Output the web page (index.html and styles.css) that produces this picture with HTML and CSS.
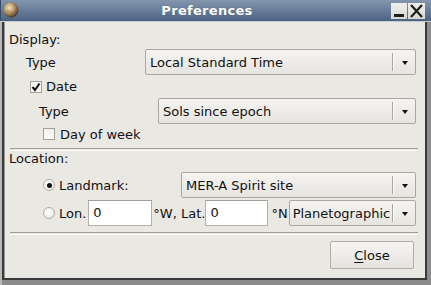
FILE: index.html
```html
<!DOCTYPE html>
<html>
<head>
<meta charset="utf-8">
<link rel="stylesheet" href="styles.css">
</head>
<body>
<div class="win">
  <div class="titlebar">
    <svg class="app-icon" width="16" height="16" viewBox="0 0 16 16">
      <defs>
        <radialGradient id="g1" cx="0.38" cy="0.35" r="0.65">
          <stop offset="0" stop-color="#efe3c4"/>
          <stop offset="0.45" stop-color="#c3a272"/>
          <stop offset="0.85" stop-color="#76593a"/>
          <stop offset="1" stop-color="#4b3a28"/>
        </radialGradient>
      </defs>
      <circle cx="8" cy="8" r="7.5" fill="url(#g1)"/>
      <path d="M4 9 q2 -1 4 1 q2 1 4 -1" stroke="#8a6a3c" stroke-width="0.8" fill="none" opacity="0.6"/>
    </svg>
    <div class="title">Preferences</div>
    <div class="wbtn min"><span class="min-bar"></span></div>
    <div class="wbtn close">
      <svg width="15" height="14" viewBox="0 0 15 14"><path d="M2 1 L13 13 M13 1 L2 13" stroke="#1e1e1e" stroke-width="2.2" fill="none"/></svg>
    </div>
  </div>
  <div class="client">
    <div class="section">Display:</div>
    <div class="row r-type1">
      <span class="lbl">Type</span>
      <div class="combo"><span class="val">Local Standard Time</span><span class="csep"></span><span class="arrow"></span></div>
    </div>
    <div class="crow r-date">
      <span class="check on">
        <svg width="10" height="10" viewBox="0 0 10 10"><path d="M1.5 5 L4 8 L8.5 1.5" stroke="#111" stroke-width="2" fill="none"/></svg>
      </span>
      <span>Date</span>
    </div>
    <div class="row r-type2">
      <span class="lbl">Type</span>
      <div class="combo"><span class="val">Sols since epoch</span><span class="csep"></span><span class="arrow"></span></div>
    </div>
    <div class="crow r-dow">
      <span class="check"></span>
      <span>Day of week</span>
    </div>
    <div class="hsep s1"></div>
    <div class="section">Location:</div>
    <div class="row r-land">
      <span class="radio on"><span class="dot"></span></span>
      <span class="lbl2">Landmark:</span>
      <div class="combo"><span class="val">MER-A Spirit site</span><span class="csep"></span><span class="arrow"></span></div>
    </div>
    <div class="row r-lon">
      <span class="radio"></span>
      <span class="txt">Lon.</span>
      <span class="entry e1">0</span>
      <span class="txt t2">°W, Lat.</span>
      <span class="entry e2">0</span>
      <span class="txt t3">°N</span>
      <div class="combo c-planet"><span class="val">Planetographic</span><span class="csep"></span><span class="arrow"></span></div>
    </div>
    <div class="hsep s2"></div>
    <div class="btnrow">
      <div class="button"><span><u>C</u>lose</span></div>
    </div>
  </div>
</div>
</body>
</html>
```

FILE: styles.css
```css
html, body {
  margin: 0;
  padding: 0;
}
body {
  width: 431px;
  height: 285px;
  overflow: hidden;
  font-family: "DejaVu Sans", "Liberation Sans", sans-serif;
  font-size: 13px;
  color: #111;
}
.win {
  width: 431px;
  height: 285px;
  display: flex;
  flex-direction: column;
  background: #8c8c8c;
  box-shadow: inset 2px 0 0 #b9b9b9;
}
.titlebar {
  height: 21px;
  flex: none;
  display: flex;
  align-items: center;
  background: linear-gradient(#8496ad, #6a7f9b 45%, #4b6282);
  border-bottom: 1px solid #c6cbd2;
  box-shadow: inset 1px 0 0 #3a4a60;
}
.app-icon {
  margin-left: 3px;
  margin-top: -2px;
  flex: none;
}
.title {
  flex: 1;
  text-align: center;
  color: #fff;
  font-weight: bold;
  font-size: 13px;
  letter-spacing: 0.3px;
  padding-left: 4px;
  text-shadow: 0 0 1px rgba(0,0,0,0.3);
}
.wbtn {
  width: 16px;
  height: 16px;
  flex: none;
  background: linear-gradient(#f0f0ee, #d6d6d2);
  display: flex;
  align-items: center;
  justify-content: center;
  margin-top: 1px;
}
.wbtn.min {
  margin-right: 1px;
}
.min-bar {
  width: 10px;
  height: 3px;
  background: #1e1e1e;
  margin-top: 8px;
}
.wbtn.close {
  width: 17px;
  margin-right: 6px;
}
.client {
  flex: 1;
  margin: 0 4px 5px 2px;
  border-left: 2px solid #3a3a3a;
  border-right: 2px solid #3a3a3a;
  border-bottom: 2px solid #3a3a3a;
  box-shadow: inset 1px 0 0 #9a9a96;
  background: #eae8e3;
  padding: 10px 9px 0 5px;
  display: flex;
  flex-direction: column;
}
.section {
  height: 16px;
  line-height: 16px;
}
.row {
  display: flex;
  align-items: center;
  height: 26px;
}
.lbl {
  width: 119px;
  flex: none;
}
.r-type1 {
  margin-top: 1px;
  padding-left: 17px;
}
.r-type2 {
  padding-left: 30px;
}
.crow {
  display: flex;
  align-items: center;
}
.r-date {
  height: 23px;
  padding-left: 21px;
}
.r-dow {
  height: 20px;
  padding-left: 34px;
}
.check {
  width: 12px;
  height: 12px;
  box-sizing: border-box;
  border: 1px solid #a3a19a;
  background: linear-gradient(#f2f1ee, #fbfbfa);
  margin-right: 4px;
  display: flex;
  align-items: center;
  justify-content: center;
}
.r-dow .check {
  margin-right: 5px;
}
.combo {
  flex: 1;
  height: 26px;
  box-sizing: border-box;
  border: 1px solid #a9a7a0;
  border-radius: 2px;
  background: linear-gradient(#f5f4f1, #e6e4df);
  display: flex;
  align-items: center;
  min-width: 0;
}
.combo .val {
  flex: 1;
  padding-left: 4px;
  white-space: nowrap;
  overflow: hidden;
}
.csep {
  width: 1px;
  height: 18px;
  background: #a8a6a0;
  border-right: 1px solid #fbfbfa;
  flex: none;
}
.arrow {
  width: 21px;
  height: 24px;
  flex: none;
  display: flex;
  align-items: center;
  justify-content: center;
}
.arrow::before {
  content: "";
  display: block;
  width: 0;
  height: 0;
  border-left: 3.5px solid transparent;
  border-right: 3.5px solid transparent;
  border-top: 4px solid #111;
  margin-top: 1px;
}
.hsep {
  height: 1px;
  border-top: 1px solid #9f9d97;
  border-bottom: 1px solid #fbfbfa;
  margin-right: -2px;
  margin-left: 1px;
}
.s1 {
  margin-top: 4px;
}
.r-land {
  margin-top: 5px;
  padding-left: 34px;
}
.radio {
  width: 12px;
  height: 12px;
  box-sizing: border-box;
  border-radius: 50%;
  border: 1px solid #b0aea7;
  background: radial-gradient(circle at 40% 35%, #ffffff, #f0efec 60%, #dcdad5);
  display: flex;
  align-items: center;
  justify-content: center;
  flex: none;
  margin-right: 4px;
}
.dot {
  width: 5px;
  height: 5px;
  border-radius: 50%;
  background: #111;
}
.lbl2 {
  width: 122px;
  flex: none;
}
.r-lon {
  margin-top: 2px;
  padding-left: 34px;
}
.txt {
  white-space: nowrap;
  flex: none;
}
.entry {
  height: 26px;
  box-sizing: border-box;
  background: #fff;
  border: 1px solid #b2b0a9;
  border-top-color: #a09e97;
  padding-left: 4px;
  line-height: 24px;
  flex: none;
}
.e1 {
  width: 64px;
  margin-left: 2px;
  margin-right: 1px;
}
.e2 {
  width: 63px;
  margin-left: 0;
  margin-right: 3px;
}
.t3 {
  margin-right: 1px;
}
.c-planet .val {
  padding-left: 3px;
}
.s2 {
  margin-top: 6px;
}
.btnrow {
  display: flex;
  justify-content: flex-end;
  margin-top: 6px;
  margin-right: 2px;
}
.button {
  width: 84px;
  height: 28px;
  box-sizing: border-box;
  border: 1px solid #aeaca5;
  border-radius: 2px;
  background: linear-gradient(#f6f5f3, #e5e3de);
  display: flex;
  align-items: center;
  justify-content: center;
}
.button u {
  text-underline-offset: 2px;
}
```
